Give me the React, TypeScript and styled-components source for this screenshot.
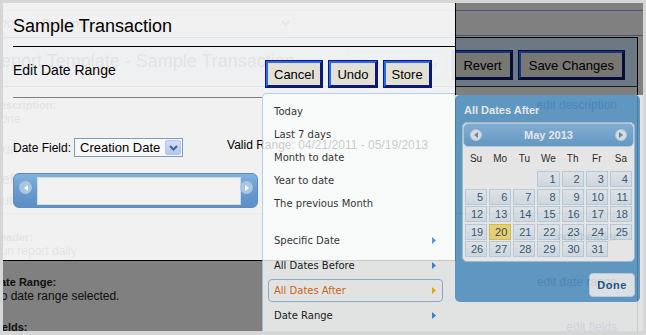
import React from 'react';
import styled, { createGlobalStyle } from 'styled-components';

const presets = ['Today', 'Last 7 days', 'Month to date', 'Year to date', 'The previous Month'];
const ranges = ['Specific Date', 'All Dates Before', 'All Dates After', 'Date Range'];
const weekdays = ['Su', 'Mo', 'Tu', 'We', 'Th', 'Fr', 'Sa'];
const LEAD = 3; // May 2013 starts on a Wednesday
const TODAY = 20;

const sections = [
  { title: 'Header:', value: 'Run report daily', link: 'edit header' },
  { title: 'Date Range:', value: 'No date range selected.', link: 'edit date range' },
  { title: 'Fields:', value: 'Amount, Date', link: 'edit fields' },
];

const GlobalStyle = createGlobalStyle`
  html, body {
    margin: 0;
    padding: 0;
    background: #d6d6d6;
  }
  body {
    font-family: 'Liberation Sans', Arial, sans-serif;
  }
`;

const Chevron = () => (
  <svg width="9" height="6" viewBox="0 0 9 6">
    <path d="M1 1l3.5 3.5L8 1" fill="none" stroke="#4d6185" strokeWidth="2" />
  </svg>
);

const Triangle = ({ dir, color, w = 4, h = 7 }: { dir: 'left' | 'right'; color: string; w?: number; h?: number }) => (
  <svg width={w} height={h} viewBox={`0 0 ${w} ${h}`}>
    {dir === 'right'
      ? <path d={`M0 0L${w} ${h / 2}L0 ${h}Z`} fill={color} />
      : <path d={`M${w} 0L0 ${h / 2}L${w} ${h}Z`} fill={color} />}
  </svg>
);

const App: React.FC = () => {
  const cells: (number | null)[] = [
    ...Array.from({ length: LEAD }, () => null),
    ...Array.from({ length: 31 }, (_, i) => i + 1),
  ];

  return (
    <>
      <GlobalStyle />
      <Frame>
        <Screen>
          <Page>
            <HeaderBand>
              <BandLabel>Report:</BandLabel>
              <BandSelect>
                <span>Dynamic</span>
                <Chevron />
              </BandSelect>
            </HeaderBand>

            <Toolbar>
              <PageTitle>Report Template - Sample Transaction</PageTitle>
              <CenterBox>Report Center</CenterBox>
              <ToolButtons>
                <Button $wide>Revert</Button>
                <Button $wide>Save Changes</Button>
              </ToolButtons>
            </Toolbar>

            <Body>
              <div>
                <HeadRow>
                  <Heading>Description:</Heading>
                  <EditLink>edit description</EditLink>
                </HeadRow>
                <Value>None</Value>
              </div>
              <Misc>
                <MiscItem>Run</MiscItem>
                <MiscItem $gap={14}>Delete</MiscItem>
                <MiscItem $gap={5}>Summary</MiscItem>
              </Misc>
              <Divider />
              <Sections>
                {sections.map((s) => (
                  <div key={s.title}>
                    <HeadRow>
                      <Heading>{s.title}</Heading>
                      <EditLink>{s.link}</EditLink>
                    </HeadRow>
                    <Value>{s.value}</Value>
                  </div>
                ))}
              </Sections>
            </Body>
          </Page>

          <Dialog>
            <DialogTitle>Sample Transaction</DialogTitle>
            <Rule />
            <ActionRow>
              <ActionLabel>Edit Date Range</ActionLabel>
              <ButtonGroup>
                <Button>Cancel</Button>
                <Button>Undo</Button>
                <Button>Store</Button>
              </ButtonGroup>
            </ActionRow>
            <Rule $short />
            <FieldRow>
              <FieldLabel>Date Field:</FieldLabel>
              <Select>
                <SelectText>Creation Date</SelectText>
                <SelectBtn><Chevron /></SelectBtn>
              </Select>
              <ValidRange>Valid Range: 04/21/2011 - 05/19/2013</ValidRange>
            </FieldRow>
            <Scroller>
              <ScrollBtn><Triangle dir="left" color="#ffffff" w={4} h={6} /></ScrollBtn>
              <ScrollWindow />
              <ScrollBtn $right><Triangle dir="right" color="#ffffff" w={4} h={6} /></ScrollBtn>
            </Scroller>
          </Dialog>

          <Picker>
            <Menu>
              {presets.map((p) => (
                <MenuItem key={p}>{p}</MenuItem>
              ))}
              <RangeList>
                {ranges.map((r) => {
                  const active = r === 'All Dates After';
                  return (
                    <MenuItem key={r} $range $active={active}>
                      {r}
                      <Triangle dir="right" color={active ? '#f2b000' : '#2f80d4'} />
                    </MenuItem>
                  );
                })}
              </RangeList>
            </Menu>

            <CalendarCol>
              <CalPanel>
                <CalTitle>All Dates After</CalTitle>
                <Calendar>
                  <CalHeader>
                    <NavBtn><Triangle dir="left" color="#5b88b2" w={4} h={6} /></NavBtn>
                    <MonthName>May 2013</MonthName>
                    <NavBtn><Triangle dir="right" color="#5b88b2" w={4} h={6} /></NavBtn>
                  </CalHeader>
                  <WeekRow>
                    {weekdays.map((d) => (
                      <WeekDay key={d}>{d}</WeekDay>
                    ))}
                  </WeekRow>
                  <DayGrid>
                    {cells.map((d, i) =>
                      d === null
                        ? <span key={`e${i}`} />
                        : <DayCell key={d} $today={d === TODAY}>{d}</DayCell>
                    )}
                  </DayGrid>
                </Calendar>
                <DoneRow>
                  <DoneButton>Done</DoneButton>
                </DoneRow>
              </CalPanel>
            </CalendarCol>
          </Picker>
        </Screen>
      </Frame>
    </>
  );
};

export default App;

const Frame = styled.div`
  width: 646px;
  height: 335px;
  box-sizing: border-box;
  padding: 3px 3px 4px 3px;
  background: #d6d6d6;
`;

const Screen = styled.div`
  position: relative;
  width: 640px;
  height: 328px;
  overflow: hidden;
  background: #f2f2f2;
`;

/* ---------- report page behind the modal ---------- */

const Page = styled.div`
  width: 635px;
  height: 100%;
  color: #222;
`;

const HeaderBand = styled.div`
  margin-top: 7px;
  height: 24px;
  border-top: 1px solid #9797e6;
  border-bottom: 1px solid #9797e6;
  margin-bottom: 1px;
  display: flex;
  align-items: center;
  width: 640px;
`;

const BandLabel = styled.span`
  margin-left: -18px;
  font-size: 12px;
  width: 51px;
`;

const BandSelect = styled.div`
  width: 259px;
  height: 19px;
  box-sizing: border-box;
  border: 1px solid #b8c4dc;
  display: flex;
  align-items: center;
  justify-content: space-between;
  padding: 0 4px 0 5px;
  font-size: 13px;
`;

const Toolbar = styled.div`
  height: 50px;
  box-sizing: border-box;
  border-top: 1px solid #000;
  border-bottom: 1px solid #333;
  border-right: 1px solid #000;
  background: #cce3f9;
  display: flex;
  align-items: flex-start;
  padding: 13px 13px 0 0;
`;

const PageTitle = styled.div`
  margin: -1px 0 0 -15px;
  font-size: 18px;
  line-height: 22px;
  white-space: nowrap;
`;

const CenterBox = styled.div`
  margin-left: auto;
  margin-right: 6px;
  width: 100px;
  height: 28px;
  box-sizing: border-box;
  border: 1px solid #a8b8d8;
  display: flex;
  align-items: center;
  justify-content: center;
  font-size: 13px;
  color: #333;
`;

const ToolButtons = styled.div`
  display: flex;
  gap: 7px;
`;

const Body = styled.div`
  margin-left: -11px;
  border-right: 1px solid #000;
  padding: 11px 20px 0 0;
  height: 260px;
`;

const HeadRow = styled.div`
  display: flex;
  justify-content: space-between;
  align-items: center;
  line-height: 14px;
`;

const Heading = styled.span`
  font-size: 11px;
  font-weight: bold;
`;

const EditLink = styled.span`
  font-size: 12px;
  color: #2050a0;
`;

const Value = styled.div`
  font-size: 12px;
  line-height: 14px;
`;

const Misc = styled.div`
  margin-top: 15px;
`;

const MiscItem = styled.div<{ $gap?: number }>`
  margin-top: ${(p) => p.$gap ?? 0}px;
  font-size: 14px;
  line-height: 16px;
`;

const Divider = styled.div`
  margin-top: 5px;
  height: 1px;
  background: #a0a0a0;
`;

const Sections = styled.div`
  margin-top: 16px;
  display: flex;
  flex-direction: column;
  gap: 17px;
`;

/* ---------- modal dialog ---------- */

const Dialog = styled.div`
  position: absolute;
  left: 0;
  top: 0;
  width: 453px;
  height: 258px;
  box-sizing: border-box;
  border-right: 1px solid #000;
  border-bottom: 1px solid #000;
  background: rgba(241, 241, 241, 0.93);
  box-shadow: 0 0 0 1200px rgba(0, 0, 0, 0.47);
  padding: 12px 0 0 10px;
  color: #000;
`;

const DialogTitle = styled.div`
  font-size: 18px;
  line-height: 22px;
`;

const Rule = styled.div<{ $short?: boolean }>`
  margin-top: 9px;
  height: 1px;
  width: ${(p) => (p.$short ? '249px' : 'auto')};
  background: ${(p) => (p.$short ? '#808080' : '#000')};
`;

const ActionRow = styled.div`
  margin-top: 13px;
  display: flex;
  height: 28px;
`;

const ActionLabel = styled.div`
  flex: 0 0 252px;
  margin-top: 2px;
  font-size: 14px;
  line-height: 16px;
`;

const ButtonGroup = styled.div`
  display: flex;
  gap: 7px;
  padding: 1px;
`;

const Button = styled.button<{ $wide?: boolean }>`
  height: ${(p) => (p.$wide ? 28 : 26)}px;
  padding: 0 ${(p) => (p.$wide ? 8 : 6)}px;
  box-sizing: border-box;
  font-family: 'Liberation Sans', Arial, sans-serif;
  font-size: 13px;
  color: #000;
  background: #e3e1d6;
  border: 2px solid;
  border-color: #2a68f0 #0b1a78 #0b1a78 #2a68f0;
  box-shadow: 0 0 0 1px #0b1a78;
  border-radius: 0;
`;

const FieldRow = styled.div`
  margin-top: 40px;
  display: flex;
  align-items: center;
  height: 19px;
`;

const FieldLabel = styled.span`
  font-size: 12px;
  margin-right: 3px;
`;

const Select = styled.div`
  width: 109px;
  height: 19px;
  box-sizing: border-box;
  border: 1px solid #7f9db9;
  background: #f8f8f8;
  display: flex;
  align-items: center;
  padding-left: 5px;
  font-size: 13px;
`;

const SelectText = styled.span`
  flex: 1;
`;

const SelectBtn = styled.span`
  width: 16px;
  height: 15px;
  margin-right: 1px;
  box-sizing: border-box;
  border: 1px solid #b4c8f4;
  border-radius: 2px;
  background: linear-gradient(#d0dcf9, #b3c6f0);
  display: flex;
  align-items: center;
  justify-content: center;
`;

const ValidRange = styled.span`
  align-self: flex-start;
  margin-left: 44px;
  font-size: 12px;
  line-height: 14px;
  white-space: nowrap;
`;

const Scroller = styled.div`
  margin-top: 16px;
  width: 245px;
  height: 35px;
  box-sizing: border-box;
  border: 1px solid #5a8ec4;
  border-radius: 6px;
  background: linear-gradient(#82b2de, #6a9dd0 45%, #5b8fc5);
  display: flex;
  align-items: flex-start;
`;

const ScrollBtn = styled.span<{ $right?: boolean }>`
  margin: 7px 0 0 ${(p) => (p.$right ? -1 : 5)}px;
  width: 13px;
  height: 13px;
  border-radius: 50%;
  background: #a9c6e3;
  display: flex;
  align-items: center;
  justify-content: center;
`;

const ScrollWindow = styled.div`
  margin: 3px 0 0 5px;
  width: 204px;
  height: 28px;
  box-sizing: border-box;
  border: 1px solid #d0dce8;
  background: #f2f2f2;
`;

/* ---------- date range picker ---------- */

const Picker = styled.div`
  position: absolute;
  left: 259px;
  top: 90px;
  right: 0;
  height: 250px;
  display: flex;
  opacity: 0.8;
`;

const Menu = styled.div`
  width: 193px;
  box-sizing: border-box;
  padding-top: 6px;
  background: #fafcfc;
  border-left: 1px solid #a6c9e2;
  border-top: 1px solid #a6c9e2;
  border-top-left-radius: 5px;
  font-family: 'DejaVu Sans', Verdana, sans-serif;
  font-size: 10px;
  color: #000;
`;

const MenuItem = styled.div<{ $range?: boolean; $active?: boolean }>`
  height: 23px;
  box-sizing: border-box;
  margin: 0 12px ${(p) => (p.$range ? 2 : 0)}px 5px;
  padding: 0 6px 0 5px;
  border: 1px solid ${(p) => (p.$active ? '#8fb4d8' : 'transparent')};
  border-radius: 4px;
  display: flex;
  align-items: center;
  justify-content: space-between;
  color: ${(p) => (p.$active ? '#dc5e00' : '#000')};
  white-space: nowrap;
`;

const RangeList = styled.div`
  margin-top: 14px;
`;

const CalendarCol = styled.div`
  flex: 1;
  margin-top: 2px;
  padding-right: 3px;
  background: #fafcfc;
`;

const CalPanel = styled.div`
  width: 185px;
  box-sizing: border-box;
  padding: 8px 5px 5px 7px;
  background: #589dd2;
  border-radius: 5px;
`;

const CalTitle = styled.div`
  margin-left: 2px;
  font-size: 11px;
  font-weight: bold;
  line-height: 14px;
  color: #fff;
`;

const Calendar = styled.div`
  margin-top: 5px;
  box-sizing: border-box;
  height: 140px;
  border: 1px solid #a6c9e2;
  border-radius: 5px;
  background: #fff;
`;

const CalHeader = styled.div`
  height: 24px;
  box-sizing: border-box;
  border: 1px solid #c5dbec;
  border-radius: 5px;
  background: linear-gradient(#84b8e6, #5c9fd4);
  display: flex;
  align-items: center;
  justify-content: space-between;
  padding: 0 6px;
`;

const NavBtn = styled.span`
  width: 12px;
  height: 12px;
  box-sizing: border-box;
  border-radius: 50%;
  border: 1px solid #c4d8ea;
  background: #eef4f9;
  display: flex;
  align-items: center;
  justify-content: center;
`;

const MonthName = styled.span`
  font-size: 11px;
  font-weight: bold;
  color: #fff;
`;

const WeekRow = styled.div`
  height: 23px;
  padding: 0 2px;
  display: grid;
  grid-template-columns: repeat(7, 1fr);
  column-gap: 2px;
  align-items: center;
`;

const WeekDay = styled.span`
  text-align: center;
  font-size: 10px;
  color: #111;
`;

const DayGrid = styled.div`
  padding: 1px 2px 0;
  display: grid;
  grid-template-columns: repeat(7, 1fr);
  grid-auto-rows: 16px;
  column-gap: 2px;
  row-gap: 1.5px;
`;

const DayCell = styled.span<{ $today?: boolean }>`
  box-sizing: border-box;
  border: 1px solid ${(p) => (p.$today ? '#f2c73a' : '#c5dbec')};
  background: ${(p) => (p.$today ? '#fde37a' : 'linear-gradient(#f6fbfe, #e1edf7)')};
  color: ${(p) => (p.$today ? '#363636' : '#2a4e70')};
  text-align: right;
  padding-right: 3px;
  font-size: 11px;
  line-height: 14px;
`;

const DoneRow = styled.div`
  margin-top: 11px;
  display: flex;
  justify-content: flex-end;
`;

const DoneButton = styled.button`
  width: 46px;
  height: 24px;
  box-sizing: border-box;
  border: 1px solid #c5dbec;
  border-radius: 4px;
  background: #f3f8fc;
  font-family: 'Liberation Sans', Arial, sans-serif;
  font-size: 11px;
  font-weight: bold;
  letter-spacing: 0.5px;
  color: #0a5090;
  padding: 0;
`;
